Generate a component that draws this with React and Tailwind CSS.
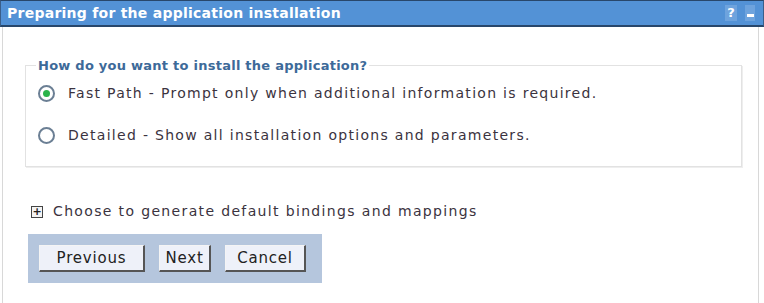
import { useState } from "react";

const font = { fontFamily: '"DejaVu Sans", Verdana, sans-serif' };

function Radio({ checked, onClick }) {
  return (
    <span
      onClick={onClick}
      className="w-[17px] h-[17px] rounded-full border-2 border-[#6b7f94] bg-white flex items-center justify-center shrink-0 cursor-pointer"
    >
      {checked && <span className="w-[7px] h-[7px] rounded-full bg-[#2bb34a]" />}
    </span>
  );
}

function Btn({ children, w }) {
  return (
    <button
      className={`${w} h-[27px] bg-[#eef1f9] border border-t-[#f4f4f4] border-l-[#f4f4f4] border-b-[#555] border-r-[#555] border-b-2 border-r-2 text-[15px] tracking-[0.8px] text-[#222]`}
    >
      {children}
    </button>
  );
}

export default function App() {
  const [mode, setMode] = useState("fast");
  return (
    <div className="w-[764px] h-[303px] bg-white overflow-hidden relative text-[#333]" style={font}>
      <div className="h-[27px] bg-[#5392d6] border-t border-b-2 border-[#28476b] border-x border-x-[#3a5f8a] flex items-center pl-[6px] pr-[8px]">
        <span className="text-white font-bold text-[14px] tracking-[0.25px]">Preparing for the application installation</span>
        <div className="grow" />
        <span className="w-[12px] h-[16px] text-white font-bold text-[13px] bg-[#6ea3dd] flex items-center justify-center mr-[8px]">?</span>
        <span className="w-[10px] h-[16px] bg-[#6ea3dd] flex items-end justify-center pb-[4px]">
          <span className="w-[7px] h-[3px] bg-white" />
        </span>
      </div>
      <div className="ml-[2px] mr-[5px] border-l border-r border-[#d8d8d8] h-[276px] pt-[35px] pl-[22px] pr-[16px]">
        <fieldset className="border border-[#e2e2e2] pl-[12px] pr-0 pt-[2px] h-[111px] -mt-[6px] shadow-[1px_1px_0_#eeeeee]">
          <legend className="text-[#3d6a99] font-bold text-[13px] px-[2px] -ml-[2px] tracking-[0.25px]">
            How do you want to install the application?
          </legend>
          <label className="flex items-center gap-[13px] mt-[5px] h-[22px]">
            <Radio checked={mode === "fast"} onClick={() => setMode("fast")} />
            <span className="text-[14px] text-[#3b3340] tracking-[1.3px]">
              Fast Path - Prompt only when additional information is required.
            </span>
          </label>
          <label className="flex items-center gap-[13px] mt-[20px] h-[22px]">
            <Radio checked={mode === "detailed"} onClick={() => setMode("detailed")} />
            <span className="text-[14px] text-[#3b3340] tracking-[1.3px]">
              Detailed - Show all installation options and parameters.
            </span>
          </label>
        </fieldset>
        <div className="flex items-center mt-[34px] pl-[6px] gap-[10px]">
          <span className="w-[12px] h-[12px] border border-[#444] bg-[#f4f4f4] flex items-center justify-center text-[11px] leading-none font-bold text-[#222]">+</span>
          <span className="text-[14px] text-[#3b3340] tracking-[1.35px]">Choose to generate default bindings and mappings</span>
        </div>
        <div className="mt-[12px] ml-[3px] w-[294px] h-[49px] bg-[#b5c6dd] flex items-center pl-[11px] gap-[14px]">
          <Btn w="w-[106px]">Previous</Btn>
          <Btn w="w-[52px]">Next</Btn>
          <Btn w="w-[81px]">Cancel</Btn>
        </div>
      </div>
    </div>
  );
}
